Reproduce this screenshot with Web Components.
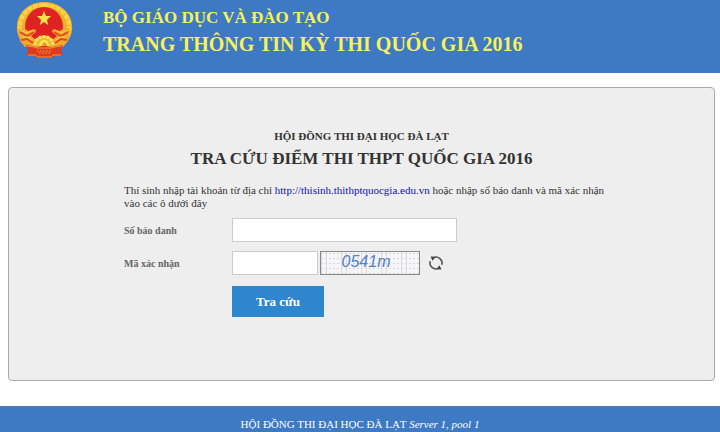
<!DOCTYPE html>
<html lang="vi">
<head>
<meta charset="utf-8">
<meta name="viewport" content="width=device-width, initial-scale=1">
<title>Tra cứu điểm thi THPT Quốc gia 2016</title>
<style>
    body {
        margin: 0;
        background-color: #fff;
        color: #333;
        font: 11px/13px "Liberation Serif", "Times New Roman", serif;
    }

    a {
        color: #1010b0;
        text-decoration: none;
    }
</style>
</head>
<body>
<exam-page>
    <site-header slot="header">
        <national-emblem slot="logo"></national-emblem>
        <span slot="ministry">BỘ GIÁO DỤC VÀ ĐÀO TẠO</span>
        <span slot="site">TRANG THÔNG TIN KỲ THI QUỐC GIA 2016</span>
    </site-header>
    <lookup-panel>
        <span slot="council">HỘI ĐỒNG THI ĐẠI HỌC ĐÀ LẠT</span>
        <span slot="title">TRA CỨU ĐIỂM THI THPT QUỐC GIA 2016</span>
        <span slot="intro">Thí sinh nhập tài khoản từ địa chỉ <a href="http://thisinh.thithptquocgia.edu.vn">http://thisinh.thithptquocgia.edu.vn</a> hoặc nhập số báo danh và mã xác nhận<br>vào các ô dưới đây</span>
        <lookup-form></lookup-form>
    </lookup-panel>
    <site-footer slot="footer">HỘI ĐỒNG THI ĐẠI HỌC ĐÀ LẠT <em>Server 1, pool 1</em></site-footer>
</exam-page>

<template id="exam-page-template">
    <style>
        :host {
            display: flex;
            flex-direction: column;
            min-height: 100vh;
        }

        main {
            flex: 1;
            display: flex;
            flex-direction: column;
            padding: 14px 5px 25px 8px;
        }
    </style>
    <slot name="header"></slot>
    <main><slot></slot></main>
    <slot name="footer"></slot>
</template>

<template id="site-header-template">
    <style>
        :host {
            display: block;
            background-color: #3e79c3;
            color: #f7f25a;
            font-weight: bold;
        }

        header {
            display: flex;
            gap: 30px;
            padding: 0 16px 12px;
        }

        .titles {
            padding-top: 6px;
        }

        p, h1 {
            margin: 0;
        }

        p {
            font-size: 17px;
            line-height: 24px;
        }

        h1 {
            font-size: 20px;
            line-height: 28px;
        }
    </style>
    <header>
        <slot name="logo"></slot>
        <div class="titles">
            <p><slot name="ministry"></slot></p>
            <h1><slot name="site"></slot></h1>
        </div>
    </header>
</template>

<template id="national-emblem-template">
    <style>
        :host {
            display: block;
            flex: none;
        }

        svg {
            display: block;
            width: 57px;
            height: 61px;
        }
    </style>
    <svg viewBox="0 0 57 61" aria-hidden="true">
        <!-- rice wreath -->
        <path d="M28 2C13 2 2 12 1 25c-1 9 3 16 10 22h35c7-6 11-13 10-22C55 12 43 2 28 2z" fill="#efb02c"/>
        <path d="M28 5C15 5 5 13 4 25c-1 8 3 15 8 19M28 5c13 0 24 8 25 20 1 8-3 15-8 19" fill="none" stroke="#f9d348" stroke-width="4" stroke-dasharray="5 1"/>
        <ellipse cx="28" cy="27" rx="19" ry="20" fill="#df2222"/>
        <path d="M28 11l2 5 5 0-4 4 1 5-4-3-4 3 1-5-4-4 5 0z" fill="#fde24a"/>
        <!-- rice ears over the disc -->
        <path d="M2 29l6-1 4 3 7-2 1 3-5 4 5 4-5 5-6 2-5-6zM54 29l-6-1-4 3-7-2-1 3 5 4-5 4 5 5 6 2 5-6z" fill="#f0a92e"/>
        <path d="M4 32l7 4 7-4M5 40l6-1 6 4M52 32l-7 4-7-4M51 40l-6-1-6 4" fill="none" stroke="#e24a24" stroke-width="2"/>
        <path d="M4 30l7 3 6-3M6 37l6 0 4 3M52 30l-7 3-6-3M50 37l-6 0-4 3" fill="none" stroke="#f9d54b"/>
        <!-- cog wheel -->
        <path d="M17 46c0-14 22-14 22 0z" fill="#f3b632"/>
        <path d="M19 45c0-11 18-11 18 0" fill="none" stroke="#fbe161" stroke-width="3" stroke-dasharray="3 1"/>
        <path d="M23 46c0-8 10-8 10 0z" fill="#ffe95a"/>
        <path d="M26 46c0-5 5-5 5 0z" fill="#ec9a30"/>
        <!-- ribbon -->
        <path d="M10 45l7 1 3 1h16l4-1 7-1-2 6 2 5-9 0-2 2H20l-2-2-8 0 2-5z" fill="#e0391f"/>
        <path d="M11 46l7 1 3 1h14l4-1 7-1M12 55h7l3 2h13l2-2h8" fill="none" stroke="#f09a34"/>
        <path d="M21 51h14M23 53h11" stroke="#f0913a" stroke-dasharray="2 1"/>
    </svg>
</template>

<template id="lookup-panel-template">
    <style>
        :host {
            flex: 1;
            display: flex;
            flex-direction: column;
            align-items: center;
            box-sizing: border-box;
            padding: 40px 16px;
            background-color: #eee;
            border: 1px solid #aaa;
            border-radius: 4px;
        }

        h2, h3, p {
            margin: 0;
        }

        h3 {
            font-size: 11px;
            line-height: 16px;
        }

        h2 {
            padding: 2px 0 12px;
            font-size: 17px;
            line-height: 26px;
        }

        .content {
            width: 100%;
            max-width: 475px;
        }

        p {
            margin-right: -16px;
        }
    </style>
    <h3><slot name="council"></slot></h3>
    <h2><slot name="title"></slot></h2>
    <div class="content">
        <p><slot name="intro"></slot></p>
        <slot></slot>
    </div>
</template>

<template id="lookup-form-template">
    <style>
        :host {
            display: block;
            padding-top: 8px;
        }

        form {
            display: grid;
            grid-template-columns: 105px 1fr;
            column-gap: 3px;
            row-gap: 9px;
            align-items: center;
        }

        label {
            color: #666;
            font-size: 10px;
            font-weight: bold;
        }

        input {
            box-sizing: border-box;
            width: 100%;
            height: 24px;
            margin: 0;
            padding: 2px 6px;
            background-color: #fff;
            border: 1px solid #ccc;
            font: inherit;
        }

        #candidate {
            max-width: 225px;
        }

        #code {
            width: 86px;
        }

        .row {
            display: flex;
            align-items: center;
            gap: 2px;
        }

        .refresh {
            margin-left: 6px;
            padding: 0;
            background: none;
            border: 0;
            cursor: pointer;
        }

        .refresh svg {
            display: block;
            width: 16px;
            height: 16px;
        }

        .submit {
            grid-column: 2;
            justify-self: start;
            margin: 2px 0 0;
            padding: 0 24px;
            background-color: #2d86ce;
            border: 0;
            color: #fff;
            font: bold 13px/31px "Liberation Serif", "Times New Roman", serif;
            cursor: pointer;
        }
    </style>
    <form>
        <label for="candidate">Số báo danh</label>
        <input id="candidate" type="text">
        <label for="code">Mã xác nhận</label>
        <div class="row">
            <input id="code" type="text">
            <captcha-image>0541m</captcha-image>
            <button class="refresh" type="button" aria-label="Đổi mã">
                <svg viewBox="0 0 16 16">
                    <path d="M5.500 2.700A6 6 0 0 1 13.800 9.800M10.500 13.300A6 6 0 0 1 2.200 6.200" fill="none" stroke="#555" stroke-width="1.600"/>
                    <path d="M2.500 1.500l5 .2-3 4zM13.500 14.500l-5-.2 3-4z" fill="#444"/>
                </svg>
            </button>
        </div>
        <button class="submit" type="submit">Tra cứu</button>
    </form>
</template>

<template id="captcha-image-template">
    <style>
        :host {
            display: block;
            box-sizing: border-box;
            width: 100px;
            height: 24px;
            padding-right: 8px;
            border: 1px solid #888;
            background-color: #f6f5f8;
            background-image:
                repeating-linear-gradient(90deg, transparent 0 2px, #f6f5f8 2px 4px),
                repeating-linear-gradient(90deg, #dcdae2 0 1px, transparent 1px 5px),
                repeating-linear-gradient(0deg, #d4d4de 0 1px, transparent 1px 5px);
            color: #5080c4;
            font: italic 16px/20px "Liberation Sans Narrow", "Arial Narrow", "Liberation Sans", sans-serif;
            text-align: center;
        }
    </style>
    <slot></slot>
</template>

<template id="site-footer-template">
    <style>
        :host {
            display: block;
            padding: 10px 0 0;
            background-color: #3e79c3;
            border-top: 1px solid #5878a0;
            color: #fff;
            line-height: 15px;
            text-align: center;
        }
    </style>
    <slot></slot>
</template>

<script>
// Attaches a copy of the template to the element's shadow root
class TemplateElement extends HTMLElement {
    constructor() {
        super();
        const template = document.getElementById(`${this.localName}-template`);
        this.attachShadow({ mode: 'open' }).appendChild(template.content.cloneNode(true));
    }
}

class LookupForm extends TemplateElement {
    connectedCallback() {
        const code = this.shadowRoot.querySelector('#code');
        this.shadowRoot.querySelector('form').addEventListener('submit', event => event.preventDefault());
        this.shadowRoot.querySelector('.refresh').addEventListener('click', () => {
            code.value = '';
            code.focus();
        });
    }
}

customElements.define('exam-page', class extends TemplateElement {});
customElements.define('site-header', class extends TemplateElement {});
customElements.define('national-emblem', class extends TemplateElement {});
customElements.define('lookup-panel', class extends TemplateElement {});
customElements.define('captcha-image', class extends TemplateElement {});
customElements.define('lookup-form', LookupForm);
customElements.define('site-footer', class extends TemplateElement {});
</script>
</body>
</html>
